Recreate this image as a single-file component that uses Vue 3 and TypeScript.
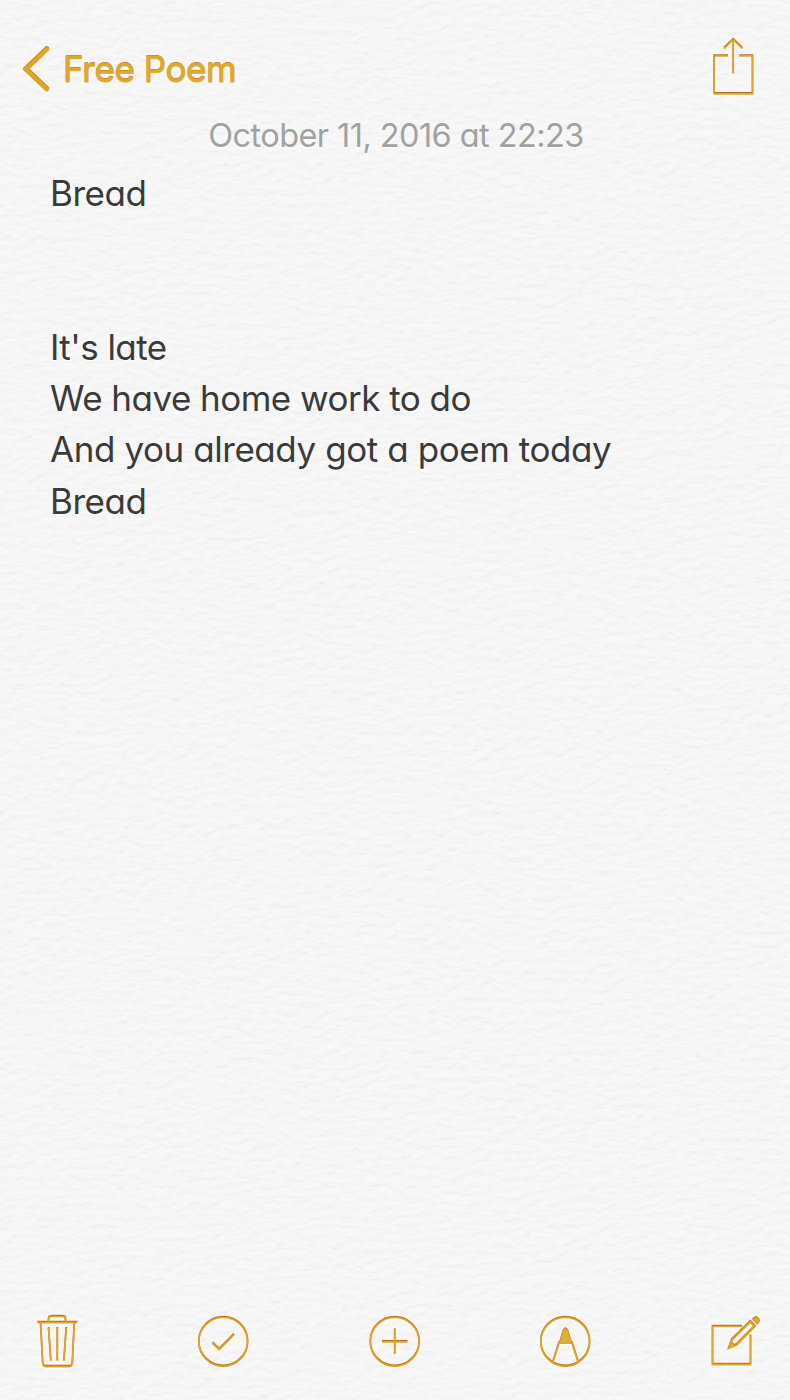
<script setup lang="ts">
interface Line {
  text: string
  spacing: number
}

const lines: Line[] = [
  { text: 'Bread', spacing: -0.45 },
  { text: '', spacing: 0 },
  { text: '', spacing: 0 },
  { text: "It's late", spacing: -0.55 },
  { text: 'We have home work to do', spacing: -0.53 },
  { text: 'And you already got a poem today', spacing: -0.43 },
  { text: 'Bread', spacing: -0.45 },
]
</script>

<template>
  <main class="note">
    <svg class="paper" width="790" height="1400" aria-hidden="true">
      <filter id="grain" x="0" y="0" width="100%" height="100%" color-interpolation-filters="sRGB">
        <feTurbulence type="fractalNoise" baseFrequency="0.085 0.15" numOctaves="3" seed="8" result="n" />
        <feDiffuseLighting in="n" surfaceScale="0.7" diffuseConstant="1.12" lighting-color="#ffffff" result="lit">
          <feDistantLight azimuth="255" elevation="60" />
        </feDiffuseLighting>
        <feComponentTransfer in="lit">
          <feFuncR type="linear" slope="0.19" intercept="0.783" />
          <feFuncG type="linear" slope="0.19" intercept="0.783" />
          <feFuncB type="linear" slope="0.19" intercept="0.783" />
        </feComponentTransfer>
      </filter>
      <rect width="790" height="1400" filter="url(#grain)" />
    </svg>

    <header class="bar">
      <button class="back">
        <svg class="ink" width="28" height="48" viewBox="22 45 28 48">
          <path d="M46.800 49.400L25.900 69.500L46.800 89.300" stroke-width="4.600" stroke-linecap="round" />
        </svg>
        <span class="back-label">Free Poem</span>
      </button>
      <button class="share" aria-label="Share">
        <svg class="ink" width="44" height="60" viewBox="711 36 44 60">
          <path d="M728 56H714V93.900H752.500V56H739M733.200 73.800V39.800M724 48.600L733.200 39.600L742.400 48.600" />
        </svg>
      </button>
    </header>

    <p class="date"><span class="date-text">October 11, 2016 at 22:23</span></p>

    <section class="body">
      <p v-for="(line, i) in lines" :key="i" class="line">
        <span :style="{ letterSpacing: line.spacing + 'px' }">{{ line.text }}</span>
      </p>
    </section>

    <footer class="tools">
      <button aria-label="Delete">
        <svg class="ink" width="80" height="80" viewBox="0 0 80 80">
          <path d="M17.300 22.600H57.200M28.500 21.500V19.500Q28.500 16.500 31.500 16.500H42.500Q45.500 16.500 45.500 19.500V21.500M20.500 23L22.700 63Q22.900 66.700 26 66.700H49Q52.100 66.700 52.300 63L54.300 23M28.500 28L30.800 61M37.300 28V61M46.200 28L43.900 61" />
        </svg>
      </button>
      <button aria-label="Checklist">
        <svg class="ink" width="80" height="80" viewBox="0 0 80 80">
          <circle cx="40.200" cy="41.900" r="24.400" />
          <path d="M29.500 43.200L36.200 49.700L51 34.700" stroke-width="1.900" />
        </svg>
      </button>
      <button aria-label="Add">
        <svg class="ink" width="80" height="80" viewBox="0 0 80 80">
          <circle cx="39.700" cy="41.900" r="24.400" />
          <path d="M27 41.800H52.500M39.700 29.200V54.300" />
        </svg>
      </button>
      <button aria-label="Sketch">
        <svg class="ink" width="80" height="80" viewBox="0 0 80 80">
          <circle cx="40.200" cy="41.900" r="24.400" />
          <path d="M28 62L34 43.200H47L53 62" />
          <path class="solid" d="M34.500 43.200L38 31Q40.400 26.300 42.800 31L46.500 43.200Z" stroke-width="1" />
        </svg>
      </button>
      <button aria-label="New note">
        <svg class="ink" width="80" height="80" viewBox="0 0 80 80">
          <path d="M47 26.500H17.500V64.600H55.500V35.500" />
          <path d="M34 48.200L37 39.900L55.300 22L59.800 26.500L41.800 44.800Z" stroke-width="2" />
          <path class="solid" d="M34 48.200L36 42.200L39.500 45.700Z" stroke-width="1" />
          <path class="solid" d="M58.300 19.700L60.200 18.100Q61 17.700 62 18.500L63.800 20.400Q64.500 21.300 63.600 22.300L62.300 23.700Z" stroke-width="1.700" />
        </svg>
      </button>
    </footer>
  </main>
</template>

<style>
body {
  margin: 0;
  background: #f6f6f6;
}
</style>

<style scoped>
.note {
  position: relative;
  box-sizing: border-box;
  width: 790px;
  height: 1400px;
  overflow: hidden;
  display: flex;
  flex-direction: column;
  background: #f6f6f6;
  color: #3a3a3a;
  font-family: Inter, "Liberation Sans", sans-serif;
  font-feature-settings: "cv11" 1;
}
.paper {
  position: absolute;
  inset: 0;
}
.bar,
.date,
.body,
.tools {
  position: relative;
}
button {
  display: flex;
  align-items: center;
  padding: 0;
  border: 0;
  background: none;
  color: #dda42b;
  font: inherit;
}
.bar {
  display: flex;
  justify-content: space-between;
  height: 96px;
  padding: 0 35px 0 22px;
}
.back {
  align-self: flex-start;
  height: 48px;
  margin-top: 45px;
  gap: 13px;
}
.back-label {
  font-size: 35px;
  line-height: 48px;
  font-weight: 400;
  letter-spacing: -0.420px;
  white-space: nowrap;
  font-feature-settings: normal;
  color: #dfa92f;
  -webkit-text-stroke: 0.900px #dfa92f;
  text-shadow: 0 -0.900px 0 #c06f30, 0 1px 1px #fff;
}
.share {
  align-self: flex-end;
}
.ink {
  display: block;
  fill: none;
  stroke: #dfa626;
  stroke-width: 1.700;
  filter: drop-shadow(0 -0.800px 0 #bd6e2c) drop-shadow(0 1px 0.500px #fff);
}
.solid {
  fill: #dfaf3c;
}
.date {
  margin: 16px 0 0;
  height: 48px;
  padding-left: 2px;
  font-size: 32.500px;
  line-height: 48px;
  text-align: center;
  letter-spacing: -0.570px;
  color: #a0a2a1;
  white-space: nowrap;
  text-shadow: 0 1px 1px #fff;
}
.body {
  padding: 8px 0 0 50px;
}
.line {
  margin: 0;
  height: 51.300px;
  font-size: 35px;
  line-height: 51.300px;
  white-space: nowrap;
  text-shadow: 0 1px 1px #fff;
}
.tools {
  display: grid;
  grid-template-columns: 163px 172px 170px 170px 80px;
  margin-top: auto;
  padding: 0 15px 20px 20px;
}
</style>
